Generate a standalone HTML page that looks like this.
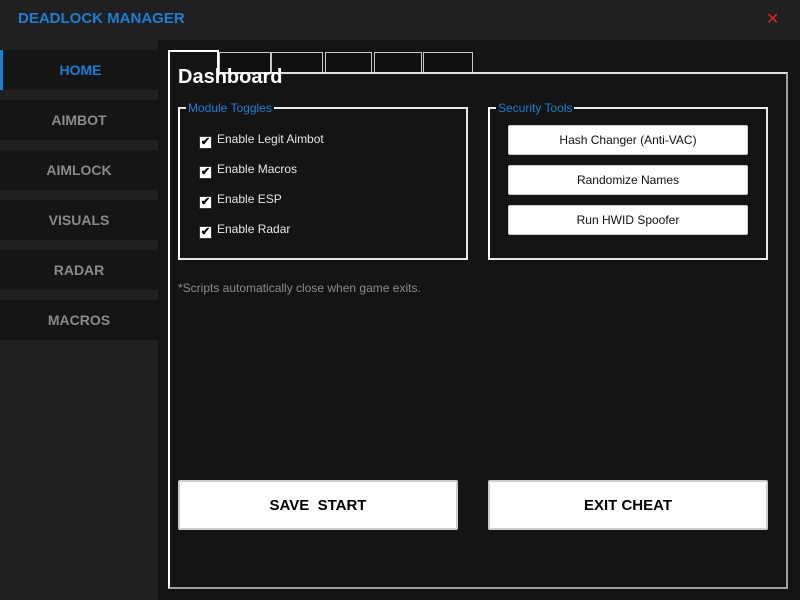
<!DOCTYPE html>
<html><head><style>
*{margin:0;padding:0;box-sizing:border-box}
body{width:800px;height:600px;background:#141414;font-family:"Liberation Sans",sans-serif;position:relative;overflow:hidden}
.a{position:absolute}
.side{left:0;top:40px;width:158px;height:560px;background:#202020}
.nb{position:absolute;left:0;width:158px;height:40px;background:#151515;color:#8a8a8a;font-weight:bold;font-size:14px;text-align:center;line-height:40px}
.tab{position:absolute;top:52px;height:21px;border:1px solid #c8c8c8;border-bottom:none;color:#111;font-size:13px;line-height:20px;text-align:center;background:#101010}
.gb{position:absolute;border:2px solid #e8e8e8;border-left-color:#fff}
.gl{position:absolute;top:-7px;left:6px;background:#141414;color:#1a7fd4;font-size:12px;line-height:12px;padding:0 2px}
.cb{position:absolute;left:19px;color:#e6e6e6;font-size:12px;line-height:14px}
.cb i{display:inline-block;width:13px;height:13px;background:#fff;border:1px solid #333;vertical-align:-2px;margin-right:5px;position:relative;font-style:normal;color:#000;font-size:11px;line-height:11px;text-align:center;font-weight:bold}
.sb{position:absolute;left:18px;width:240px;height:30px;background:#fdfdfd;border:1px solid #ccc;border-radius:2px;color:#111;font-size:12px;text-align:center;line-height:28px}
.bb{position:absolute;top:480px;width:280px;height:50px;background:#fff;border:2px solid #ccc;border-radius:2px;color:#000;font-weight:bold;font-size:15px;text-align:center;line-height:48px}
</style></head><body>
<div class="a" style="left:0;top:0;width:800px;height:40px;background:#202020"></div>
<div class="a" style="left:18px;top:10px;color:#1a7fd4;font-weight:bold;font-size:15px">DEADLOCK MANAGER</div>
<div class="a" style="left:766px;top:9px;color:#e02020;font-size:16px">✕</div>
<div class="a side"></div>
<div class="nb" style="top:50px;color:#1a7fd4;border-left:3px solid #1a7fd4">HOME</div>
<div class="nb" style="top:100px">AIMBOT</div>
<div class="nb" style="top:150px">AIMLOCK</div>
<div class="nb" style="top:200px">VISUALS</div>
<div class="nb" style="top:250px">RADAR</div>
<div class="nb" style="top:300px">MACROS</div>
<div class="a" style="left:0;top:340px;width:158px;height:260px;background:#202020"></div>
<div class="tab" style="left:219px;width:52px">Aimbot</div>
<div class="tab" style="left:271px;width:52px">Aimlock</div>
<div class="tab" style="left:325px;width:47px">Visuals</div>
<div class="tab" style="left:374px;width:48px">Radar</div>
<div class="tab" style="left:423px;width:50px">Macros</div>
<div class="a" style="left:168px;top:72px;width:620px;height:517px;border-top:2px solid #e0e0e0;border-left:2px solid #fff;border-right:2px solid #a0a0a0;border-bottom:2px solid #a0a0a0;background:#141414"></div>
<div class="a" style="left:168px;top:50px;width:51px;height:26px;border:2px solid #fff;border-bottom:none;background:#141414"></div>
<div class="a" style="left:178px;top:66px;color:#fff;font-weight:bold;font-size:20px">Dashboard</div>
<div class="gb" style="left:178px;top:107px;width:290px;height:153px"><span class="gl">Module Toggles</span>
<div class="cb" style="top:23px"><i>✔</i>Enable Legit Aimbot</div>
<div class="cb" style="top:53px"><i>✔</i>Enable Macros</div>
<div class="cb" style="top:83px"><i>✔</i>Enable ESP</div>
<div class="cb" style="top:113px"><i>✔</i>Enable Radar</div>
</div>
<div class="gb" style="left:488px;top:107px;width:280px;height:153px"><span class="gl">Security Tools</span>
<div class="sb" style="top:16px">Hash Changer (Anti-VAC)</div>
<div class="sb" style="top:56px">Randomize Names</div>
<div class="sb" style="top:96px">Run HWID Spoofer</div>
</div>
<div class="a" style="left:178px;top:281px;color:#8a8a8a;font-size:12px">*Scripts automatically close when game exits.</div>
<div class="bb" style="left:178px">SAVE&nbsp; START</div>
<div class="bb" style="left:488px">EXIT CHEAT</div>
</body></html>
